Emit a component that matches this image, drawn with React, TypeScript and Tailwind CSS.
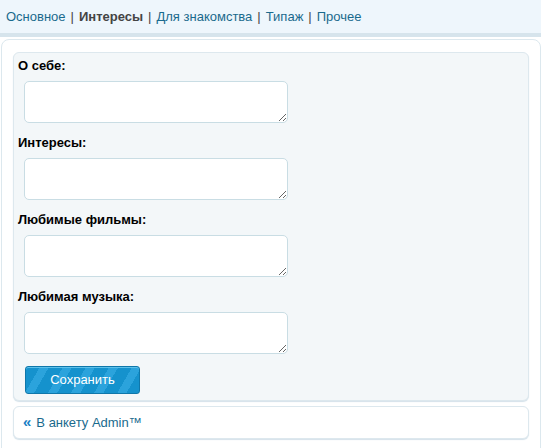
const tabs = [
  { label: "Основное", active: false },
  { label: "Интересы", active: true },
  { label: "Для знакомства", active: false },
  { label: "Типаж", active: false },
  { label: "Прочее", active: false },
];

const fields = ["О себе:", "Интересы:", "Любимые фильмы:", "Любимая музыка:"];

export default function App() {
  return (
    <div className="w-[541px] h-[448px] overflow-hidden bg-white font-['Liberation_Sans',Arial,sans-serif] text-[13px]">
      <div className="h-[37px] bg-[#eef6fc] border-b-[4px] border-[#d6e4ec] flex items-center pl-[6px] pt-[1px]">
        {tabs.map((t, i) => (
          <span key={t.label} className="flex items-center">
            {i > 0 && <span className="text-[#444] mx-[5px]">|</span>}
            <a
              href="#"
              className={
                t.active ? "font-bold text-[#444]" : "text-[#1a6a8d]"
              }
            >
              {t.label}
            </a>
          </span>
        ))}
      </div>

      <div className="ml-[1px] mt-[2px] bg-white border border-[#dce8ee] rounded-tl-[8px] rounded-tr-[8px] pt-[12px] pl-[11px] pr-[11px] pb-[10px] h-[420px]">
        <div className="bg-[#f3f7f9] border border-[#dde8ee] rounded-[6px] shadow-[0_1px_1px_#d5e2ea] pl-[4px] pt-[2px] pb-[6px]">
          {fields.map((f) => (
            <div key={f} className="h-[77px]">
              <div className="font-bold text-black h-[22px] leading-[22px]">{f}</div>
              <textarea className="block ml-[6px] mt-[4px] w-[264px] h-[42px] bg-white border border-[#c9dde4] rounded-[5px] resize-y outline-none" />
            </div>
          ))}
          <button className="mt-[3px] ml-[7px] w-[115px] h-[28px] rounded-[3px] border border-[#0f77aa] bg-[repeating-linear-gradient(120deg,#1592cd_0px,#1592cd_12px,#2ba3dc_12px,#2ba3dc_20px)] text-white text-[13px] shadow-[inset_0_1px_0_#5cc0ea]">
            Сохранить
          </button>
        </div>

        <div className="mt-[5px] h-[33px] bg-white border border-[#dde8ee] rounded-[6px] shadow-[0_1px_1px_#d5e2ea] flex items-center pl-[9px]">
          <span className="text-[#1a7fc4] font-bold text-[15px] leading-none mr-[5px] -mt-[2px]">«</span>
          <a href="#" className="text-[#1a6a8d]">В анкету Admin™</a>
        </div>
      </div>
    </div>
  );
}
